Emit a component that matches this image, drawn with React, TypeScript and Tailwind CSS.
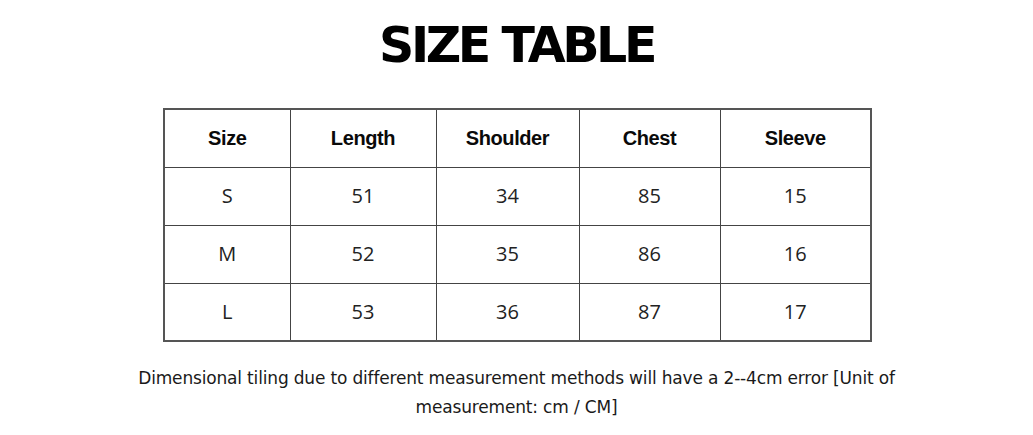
const cols = [
  { label: "Size", w: "w-[126px]" },
  { label: "Length", w: "w-[146px]" },
  { label: "Shoulder", w: "w-[143px]" },
  { label: "Chest", w: "w-[141px]" },
  { label: "Sleeve", w: "w-[151px]" },
];

const rows = [
  ["S", "51", "34", "85", "15"],
  ["M", "52", "35", "86", "16"],
  ["L", "53", "36", "87", "17"],
];

export default function App() {
  return (
    <div className="w-[1033px] h-[435px] bg-white flex flex-col items-center overflow-hidden">
      {/* Title */}
      <h1 className="mt-[18px] h-[54px] flex items-center text-[49px] font-bold tracking-[-0.07em] text-black leading-none [font-family:'DejaVu_Sans',sans-serif]">
        SIZE TABLE
      </h1>

      {/* Table */}
      <table className="mt-[36px] ml-[2px] border-collapse border-2 border-[#555]">
        <thead>
          <tr className="h-[58px]">
            {cols.map((c) => (
              <th
                key={c.label}
                className={`${c.w} border border-[#444] text-[20px] font-bold text-[#0a0a0a] tracking-[-0.02em] [font-family:'Liberation_Sans',Arial,sans-serif]`}
              >
                {c.label}
              </th>
            ))}
          </tr>
        </thead>
        <tbody>
          {rows.map((r) => (
            <tr key={r[0]} className="h-[58px]">
              {r.map((v, i) => (
                <td
                  key={i}
                  className="border border-[#444] text-center text-[20px] text-[#222] [font-family:'Open_Sans',sans-serif]"
                >
                  {v}
                </td>
              ))}
            </tr>
          ))}
        </tbody>
      </table>

      {/* Note */}
      <p className="mt-[22px] text-center text-[17px] leading-[29px] text-[#1a1a1a] [font-family:'DejaVu_Sans',sans-serif] tracking-[-0.01em]">
        Dimensional tiling due to different measurement methods will have a 2--4cm error [Unit of
        <br />
        measurement: cm / CM]
      </p>
    </div>
  );
}
